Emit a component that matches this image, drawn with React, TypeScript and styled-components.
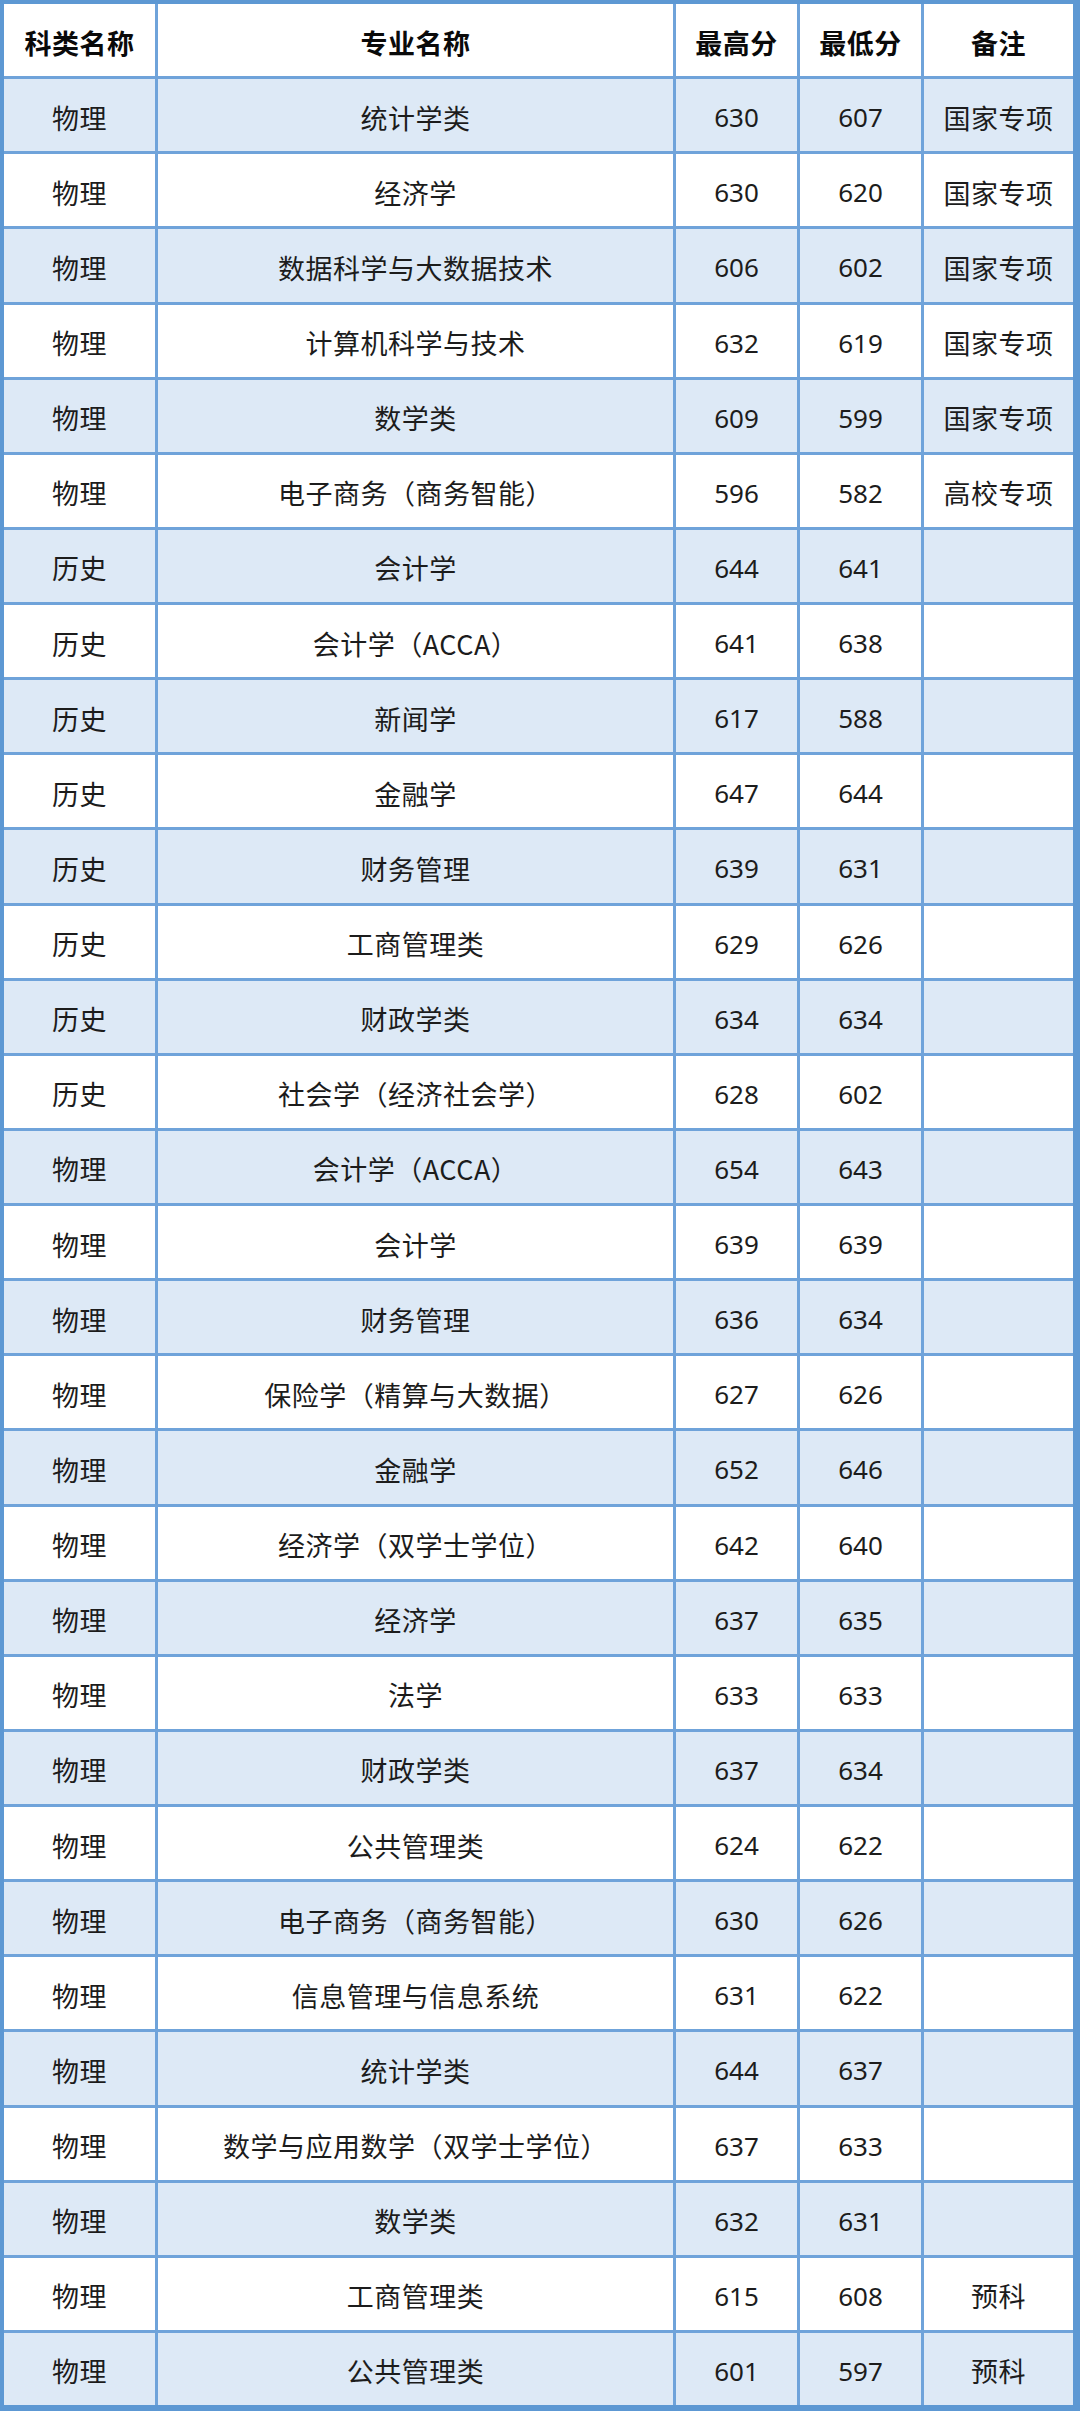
import styled, { createGlobalStyle } from "styled-components";

const GlobalStyle = createGlobalStyle`
	html, body {
		margin: 0;
		padding: 0;
		background: #ffffff;
	}
	body {
		font-family: "Noto Sans CJK SC", "Noto Sans", sans-serif;
	}
`;

const Table = styled.div`
	box-sizing: border-box;
	width: 1080px;
	height: 2411px;
	display: grid;
	grid-template-columns: 151px 515px 121px 121px 149px;
	grid-auto-rows: 1fr;
	gap: 3px;
	background: #6fa3da;
	border-style: solid;
	border-color: #5d98d3;
	border-width: 4px 7px 6px 4px;
`;

const Cell = styled.div<{ $shade: boolean; $head?: boolean }>`
	display: flex;
	align-items: center;
	justify-content: center;
	padding-top: 4px;
	background: ${(p) => (p.$shade ? "#dde9f6" : "#ffffff")};
	color: ${(p) => (p.$head ? "#0a0a0a" : "#1c1c1c")};
	font-size: 27px;
	font-weight: ${(p) => (p.$head ? 700 : 400)};
	white-space: nowrap;
	letter-spacing: 0.5px;
`;

const Num = styled.span`
	font-family: "Noto Sans", "Noto Sans CJK SC", sans-serif;
	font-size: 26px;
	letter-spacing: 0;
`;

const headers = ["科类名称", "专业名称", "最高分", "最低分", "备注"];

type Row = [string, string, string, string, string];

const rows: Row[] = [
	["物理", "统计学类", "630", "607", "国家专项"],
	["物理", "经济学", "630", "620", "国家专项"],
	["物理", "数据科学与大数据技术", "606", "602", "国家专项"],
	["物理", "计算机科学与技术", "632", "619", "国家专项"],
	["物理", "数学类", "609", "599", "国家专项"],
	["物理", "电子商务（商务智能）", "596", "582", "高校专项"],
	["历史", "会计学", "644", "641", ""],
	["历史", "会计学（ACCA）", "641", "638", ""],
	["历史", "新闻学", "617", "588", ""],
	["历史", "金融学", "647", "644", ""],
	["历史", "财务管理", "639", "631", ""],
	["历史", "工商管理类", "629", "626", ""],
	["历史", "财政学类", "634", "634", ""],
	["历史", "社会学（经济社会学）", "628", "602", ""],
	["物理", "会计学（ACCA）", "654", "643", ""],
	["物理", "会计学", "639", "639", ""],
	["物理", "财务管理", "636", "634", ""],
	["物理", "保险学（精算与大数据）", "627", "626", ""],
	["物理", "金融学", "652", "646", ""],
	["物理", "经济学（双学士学位）", "642", "640", ""],
	["物理", "经济学", "637", "635", ""],
	["物理", "法学", "633", "633", ""],
	["物理", "财政学类", "637", "634", ""],
	["物理", "公共管理类", "624", "622", ""],
	["物理", "电子商务（商务智能）", "630", "626", ""],
	["物理", "信息管理与信息系统", "631", "622", ""],
	["物理", "统计学类", "644", "637", ""],
	["物理", "数学与应用数学（双学士学位）", "637", "633", ""],
	["物理", "数学类", "632", "631", ""],
	["物理", "工商管理类", "615", "608", "预科"],
	["物理", "公共管理类", "601", "597", "预科"],
];

export default function App() {
	return (
		<>
			<GlobalStyle />
			<Table>
				{headers.map((h) => (
					<Cell key={h} $shade={false} $head>
						{h}
					</Cell>
				))}
				{rows.map((r, i) =>
					r.map((v, j) => (
						<Cell key={`${i}-${j}`} $shade={i % 2 === 0}>
							{j === 2 || j === 3 ? <Num>{v}</Num> : v}
						</Cell>
					))
				)}
			</Table>
		</>
	);
}
